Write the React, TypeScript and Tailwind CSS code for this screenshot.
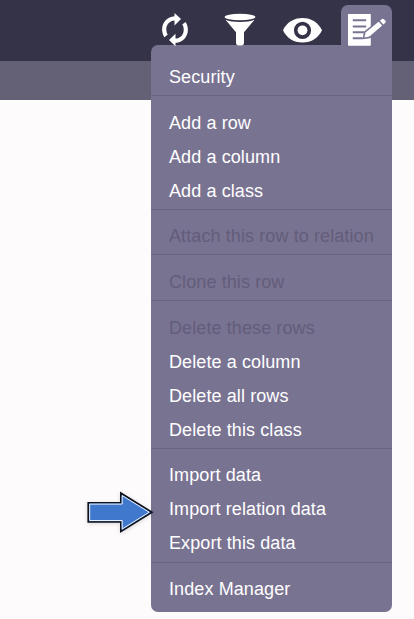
import clsx from 'clsx'

interface MenuItem {
  label: string
  disabled?: boolean
}

const MENU_GROUPS: MenuItem[][] = [
  [{ label: 'Security' }],
  [{ label: 'Add a row' }, { label: 'Add a column' }, { label: 'Add a class' }],
  [{ label: 'Attach this row to relation', disabled: true }],
  [{ label: 'Clone this row', disabled: true }],
  [
    { label: 'Delete these rows', disabled: true },
    { label: 'Delete a column' },
    { label: 'Delete all rows' },
    { label: 'Delete this class' },
  ],
  [{ label: 'Import data' }, { label: 'Import relation data' }, { label: 'Export this data' }],
  [{ label: 'Index Manager' }],
]

const REFRESH_ARROW =
  'M12.5 0L19 6.1l-6.5 6.4V7.6C7.6 8 4.3 11.6 4.3 16.3c0 2.2.5 3.9 1.5 5.3l-3.4 2.6C.9 22 .1 19.2.1 16.5.1 9.2 5.5 3.7 12.5 3.3z'

function RefreshIcon() {
  return (
    <svg width="26" height="34" viewBox="0 0 26 34" fill="currentColor">
      <path d={REFRESH_ARROW} />
      <path d={REFRESH_ARROW} transform="rotate(180 13 16.6)" />
    </svg>
  )
}

function FilterIcon() {
  return (
    <svg width="32" height="33" viewBox="0 0 32 33" fill="currentColor">
      <ellipse cx="16" cy="4" rx="15.4" ry="3.3" />
      <path d="M1.5 6.8C5 8.6 10 9 16 9s11-.4 14.5-2.2L20 19.3V30q0 2.4-2.4 2.4h-3.2Q12 32.4 12 30V19.3z" />
    </svg>
  )
}

function EyeIcon() {
  return (
    <svg width="39" height="25" viewBox="0 0 39 25" fill="currentColor">
      <path
        fillRule="evenodd"
        d="M19.5 0C10.5 0 3.5 4.8 0 12.3 3.5 19.8 10.5 24.6 19.5 24.6S35.5 19.8 39 12.3C35.5 4.8 28.5 0 19.5 0zm0 3.7a8.6 8.6 0 1 1 0 17.2 8.6 8.6 0 0 1 0-17.2z"
      />
      <circle cx="19.5" cy="12.3" r="4.9" />
    </svg>
  )
}

function EditNoteIcon() {
  return (
    <svg width="39" height="32" viewBox="0 0 39 32">
      <path d="M0 0h22.8v30.8q0 1-1 1H1q-1 0-1-1z" fill="white" />
      <path d="M4.8 6.3h13.4M4.8 12.4h13.4M4.8 18.3H16M4.8 24.2h10" stroke="#797392" strokeWidth="2" />
      <path d="M14.5 25.3l1.4-7.6L30.2 6.3l6 5.8-14 12.2z" fill="#797392" />
      <path d="M16.3 23.5l1.5-5.2L30.6 7.7l3.6 3.9-12.8 10.9z" fill="white" />
      <path d="M31.9 6.7l2-1.6q1-.8 2 .1l1.5 1.6q.8 1-.1 1.9l-1.9 1.8z" fill="white" />
    </svg>
  )
}

function PointerArrow() {
  return (
    <svg width="70" height="46" viewBox="0 0 70 46" className="drop-shadow-sm">
      <path
        d="M3.2 13.7h32.6V4L67 23.2 35.8 42.6V33H3.2z"
        fill="#3f78cd"
        stroke="#10131c"
        strokeWidth="1.6"
      />
      <path
        d="M4.7 15.1h32.5V6.6l27 16.6-27 16.8v-8.5H4.7z"
        fill="none"
        stroke="#e9f1ff"
        strokeWidth="1"
      />
    </svg>
  )
}

function ActionMenu() {
  return (
    <div className="absolute left-[151px] top-[45px] w-[241px] rounded-b-[7px] rounded-tl-[7px] bg-[#797392] pt-[15.4px] pb-[5px]">
      {MENU_GROUPS.map((group, i) => (
        <ul
          key={group[0].label}
          className={clsx(i > 0 && 'mt-[0.7px] border-t border-[#6a6483] pt-[10px]')}
        >
          {group.map((item) => (
            <li
              key={item.label}
              className={clsx(
                'flex h-[34px] items-center whitespace-nowrap pl-[18px] text-[18px] tracking-[0.1px]',
                item.disabled ? 'text-[#635d79]' : 'text-white',
              )}
            >
              {item.label}
            </li>
          ))}
        </ul>
      ))}
    </div>
  )
}

export default function App() {
  return (
    <div className="relative h-[619px] w-[414px] overflow-hidden bg-[#fdfbfc] font-['Liberation_Sans',Arial,sans-serif]">
      <header className="flex h-[61px] justify-end bg-[#353347] pr-[22px]">
        <nav className="relative z-10 flex h-[45px] items-start text-white">
          <button className="mr-[36px] mt-[13px]">
            <RefreshIcon />
          </button>
          <button className="mr-[27px] mt-[13px]">
            <FilterIcon />
          </button>
          <button className="mr-[19px] mt-[17.5px]">
            <EyeIcon />
          </button>
          <button className="flex h-[40px] w-[51px] items-start self-end rounded-t-[7px] bg-[#797392] pl-[7px] pt-[9px]">
            <EditNoteIcon />
          </button>
        </nav>
      </header>
      <div className="h-[39px] bg-[#646177]" />

      <ActionMenu />

      <div className="absolute left-[85px] top-[489px]">
        <PointerArrow />
      </div>
    </div>
  )
}
